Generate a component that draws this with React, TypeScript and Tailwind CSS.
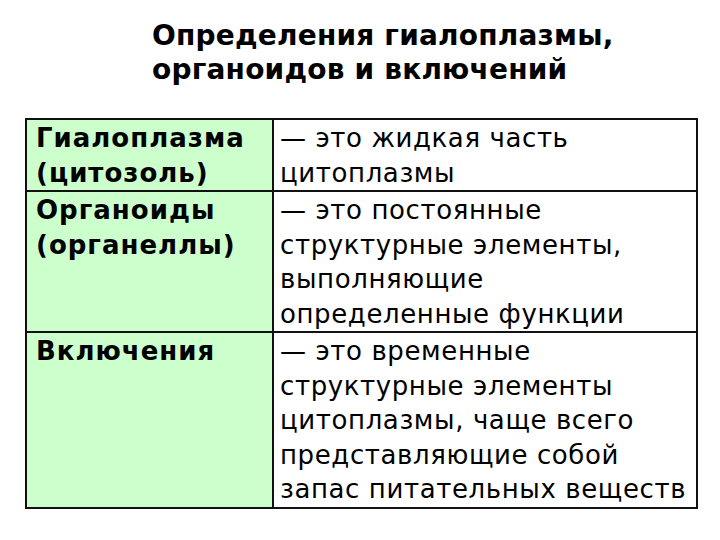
export default function App() {
  const rows = [
    {
      term: ['Гиалоплазма', '(цитозоль)'],
      def: ['— это жидкая часть', 'цитоплазмы'],
    },
    {
      term: ['Органоиды', '(органеллы)'],
      def: ['— это постоянные', 'структурные элементы,', 'выполняющие', 'определенные функции'],
    },
    {
      term: ['Включения'],
      def: [
        '— это временные',
        'структурные элементы',
        'цитоплазмы, чаще всего',
        'представляющие собой',
        'запас питательных веществ',
      ],
    },
  ]

  return (
    <div className="w-[720px] h-[540px] bg-white text-black font-['DejaVu_Sans',sans-serif]">
      {/* Title */}
      <div className="pl-[152px] pt-[19px] text-[28px] leading-[34px] font-bold tracking-[0.2px]">
        <p>Определения гиалоплазмы,</p>
        <p>органоидов и включений</p>
      </div>

      {/* Table */}
      <div className="ml-[25px] mt-[31px] w-[673px] border-2 border-[#111] grid grid-cols-[247px_1fr]">
        {rows.map((row, i) => (
          <div key={i} className="contents">
            <div
              className={`bg-[#ccffcc] border-r-2 border-[#111] pl-[9px] pt-[1px] text-[26px] leading-[34.5px] font-bold tracking-[1px] ${
                i < rows.length - 1 ? 'border-b-2' : ''
              }`}
            >
              {row.term.map((t) => (
                <p key={t} className="whitespace-nowrap">{t}</p>
              ))}
            </div>
            <div
              className={`bg-white border-[#111] pl-[6px] pt-[1px] text-[26px] leading-[34.5px] tracking-[0.6px] ${
                i < rows.length - 1 ? 'border-b-2' : ''
              }`}
            >
              {row.def.map((t) => (
                <p key={t} className="whitespace-nowrap">{t}</p>
              ))}
            </div>
          </div>
        ))}
      </div>
    </div>
  )
}
